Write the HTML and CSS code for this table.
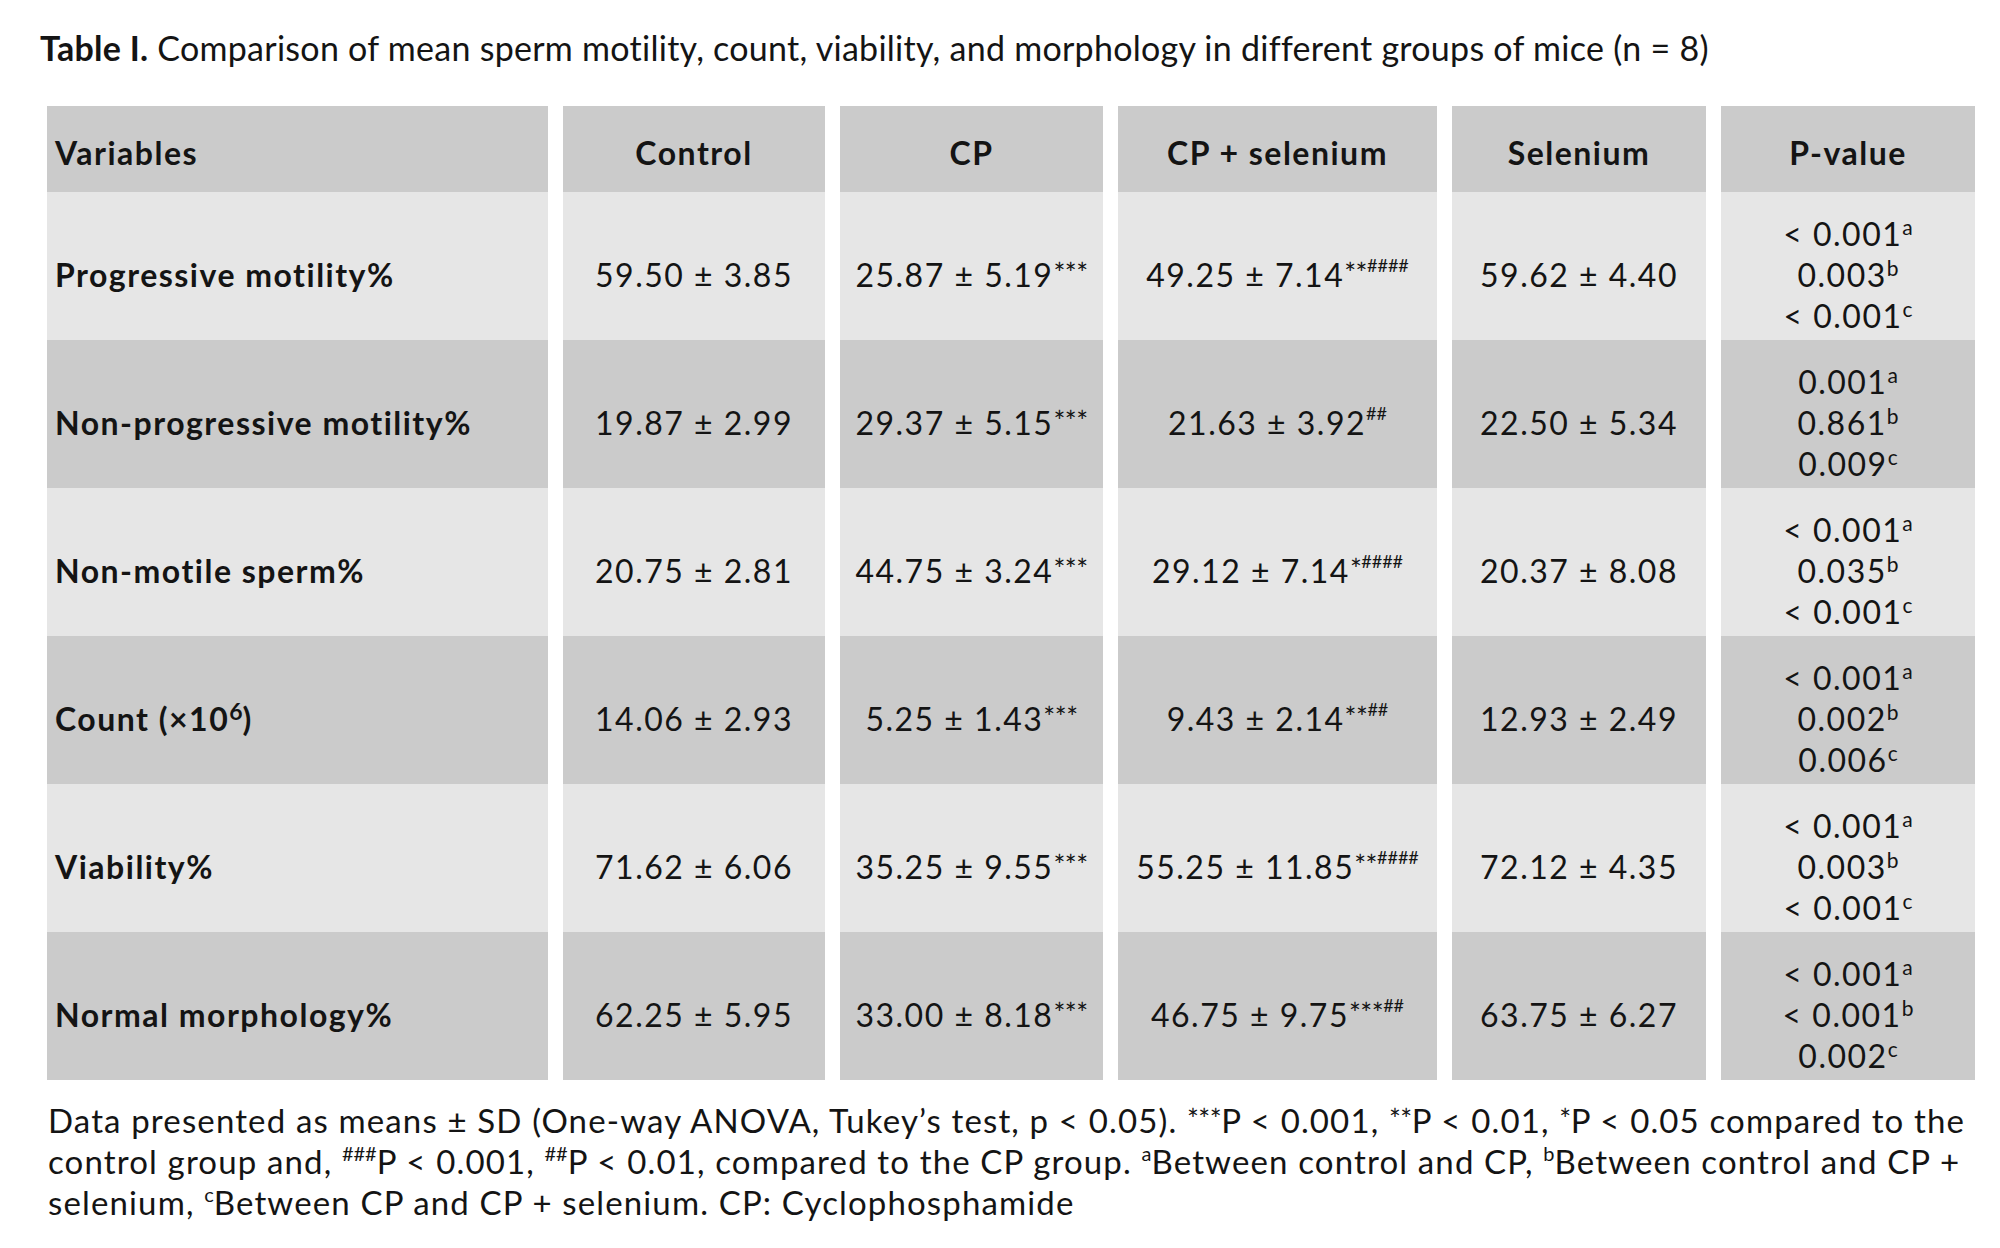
FILE: index.html
```html
<!DOCTYPE html>
<html lang="en">
<head>
<meta charset="utf-8">
<title>Table I</title>
<link rel="stylesheet" href="styles.css">
</head>
<body>
<div class="page">
  <p class="caption"><b>Table I.</b> Comparison of mean sperm motility, count, viability, and morphology in different groups of mice (n = 8)</p>
  <table class="data">
    <thead>
      <tr>
        <th class="var">Variables</th>
        <th class="c1">Control</th>
        <th class="c2">CP</th>
        <th class="c3">CP + selenium</th>
        <th class="c4">Selenium</th>
        <th class="c5">P-value</th>
      </tr>
    </thead>
    <tbody>
      <tr class="light">
        <th class="var">Progressive motility%</th>
        <td>59.50 ± 3.85</td>
        <td>25.87 ± 5.19<sup><span class="ast">***</span></sup></td>
        <td>49.25 ± 7.14<sup><span class="ast">**</span>####</sup></td>
        <td>59.62 ± 4.40</td>
        <td class="p">&lt; 0.001<sup>a</sup><br>0.003<sup>b</sup><br>&lt; 0.001<sup>c</sup></td>
      </tr>
      <tr class="dark">
        <th class="var">Non-progressive motility%</th>
        <td>19.87 ± 2.99</td>
        <td>29.37 ± 5.15<sup><span class="ast">***</span></sup></td>
        <td>21.63 ± 3.92<sup>##</sup></td>
        <td>22.50 ± 5.34</td>
        <td class="p">0.001<sup>a</sup><br>0.861<sup>b</sup><br>0.009<sup>c</sup></td>
      </tr>
      <tr class="light">
        <th class="var">Non-motile sperm%</th>
        <td>20.75 ± 2.81</td>
        <td>44.75 ± 3.24<sup><span class="ast">***</span></sup></td>
        <td>29.12 ± 7.14<sup><span class="ast">*</span>####</sup></td>
        <td>20.37 ± 8.08</td>
        <td class="p">&lt; 0.001<sup>a</sup><br>0.035<sup>b</sup><br>&lt; 0.001<sup>c</sup></td>
      </tr>
      <tr class="dark">
        <th class="var">Count (×10<sup class="exp">6</sup>)</th>
        <td>14.06 ± 2.93</td>
        <td>5.25 ± 1.43<sup><span class="ast">***</span></sup></td>
        <td>9.43 ± 2.14<sup><span class="ast">**</span>##</sup></td>
        <td>12.93 ± 2.49</td>
        <td class="p">&lt; 0.001<sup>a</sup><br>0.002<sup>b</sup><br>0.006<sup>c</sup></td>
      </tr>
      <tr class="light">
        <th class="var">Viability%</th>
        <td>71.62 ± 6.06</td>
        <td>35.25 ± 9.55<sup><span class="ast">***</span></sup></td>
        <td>55.25 ± 11.85<sup><span class="ast">**</span>####</sup></td>
        <td>72.12 ± 4.35</td>
        <td class="p">&lt; 0.001<sup>a</sup><br>0.003<sup>b</sup><br>&lt; 0.001<sup>c</sup></td>
      </tr>
      <tr class="dark">
        <th class="var">Normal morphology%</th>
        <td>62.25 ± 5.95</td>
        <td>33.00 ± 8.18<sup><span class="ast">***</span></sup></td>
        <td>46.75 ± 9.75<sup><span class="ast">***</span>##</sup></td>
        <td>63.75 ± 6.27</td>
        <td class="p">&lt; 0.001<sup>a</sup><br>&lt; 0.001<sup>b</sup><br>0.002<sup>c</sup></td>
      </tr>
    </tbody>
  </table>
  <p class="note">Data presented as means ± SD (One-way ANOVA, Tukey’s test, p &lt; 0.05). <sup><span class="ast">***</span></sup>P &lt; 0.001, <sup><span class="ast">**</span></sup>P &lt; 0.01, <sup><span class="ast">*</span></sup>P &lt; 0.05 compared to the<br>control group and, <sup>###</sup>P &lt; 0.001, <sup>##</sup>P &lt; 0.01, compared to the CP group. <sup>a</sup>Between control and CP, <sup>b</sup>Between control and CP +<br>selenium, <sup>c</sup>Between CP and CP + selenium. CP: Cyclophosphamide</p>
</div>
</body>
</html>
```

FILE: styles.css
```css
html, body {
  margin: 0;
  padding: 0;
  background: #ffffff;
}

body {
  font-family: "Lato", "Liberation Sans", sans-serif;
  color: #141414;
}

.page {
  width: 2000px;
  padding: 24px 0 0 0;
}

.caption {
  margin: 0 0 0 40px;
  font-size: 34px;
  line-height: 48px;
  letter-spacing: 0.27px;
  white-space: nowrap;
}

.caption b {
  font-weight: 700;
}

.data {
  margin: 34px 0 0 32px;
  border-collapse: separate;
  border-spacing: 15px 0;
  table-layout: fixed;
  font-size: 32px;
  letter-spacing: 1.5px;
}

.data th,
.data td {
  padding: 0;
  text-align: center;
  vertical-align: middle;
  font-weight: 400;
}

.data thead th {
  height: 86px;
  background: #cbcbcb;
  font-weight: 700;
  padding-top: 6px;
  box-sizing: border-box;
}

.data tbody tr {
  height: 148px;
}

.data tbody th,
.data tbody td {
  padding-top: 16px;
  box-sizing: border-box;
  line-height: 41px;
}

.data tbody th {
  font-weight: 700;
}

.data .var {
  width: 501px;
  text-align: left;
  padding-left: 8px;
  box-sizing: border-box;
}

.c1 { width: 262px; }
.c2 { width: 263px; }
.c3 { width: 319px; }
.c4 { width: 254px; }
.c5 { width: 254px; }

.light th,
.light td {
  background: #e6e6e6;
}

.dark th,
.dark td {
  background: #cbcbcb;
}

sup {
  line-height: 0;
}

.data sup {
  font-size: 18px;
  letter-spacing: 0;
  vertical-align: 15px;
}

.data .p sup {
  font-size: 21px;
  vertical-align: 11px;
}

.data sup.exp {
  font-size: 23px;
  vertical-align: 11px;
}

.ast {
  font-size: 28px;
  vertical-align: -12px;
  letter-spacing: -0.5px;
}

.note {
  margin: 20px 0 0 48px;
  font-size: 33px;
  line-height: 41px;
  letter-spacing: 1.14px;
  white-space: nowrap;
}

.note sup {
  font-size: 20px;
  letter-spacing: 0;
  vertical-align: 13px;
}

.note .ast {
  vertical-align: -10px;
}
```
